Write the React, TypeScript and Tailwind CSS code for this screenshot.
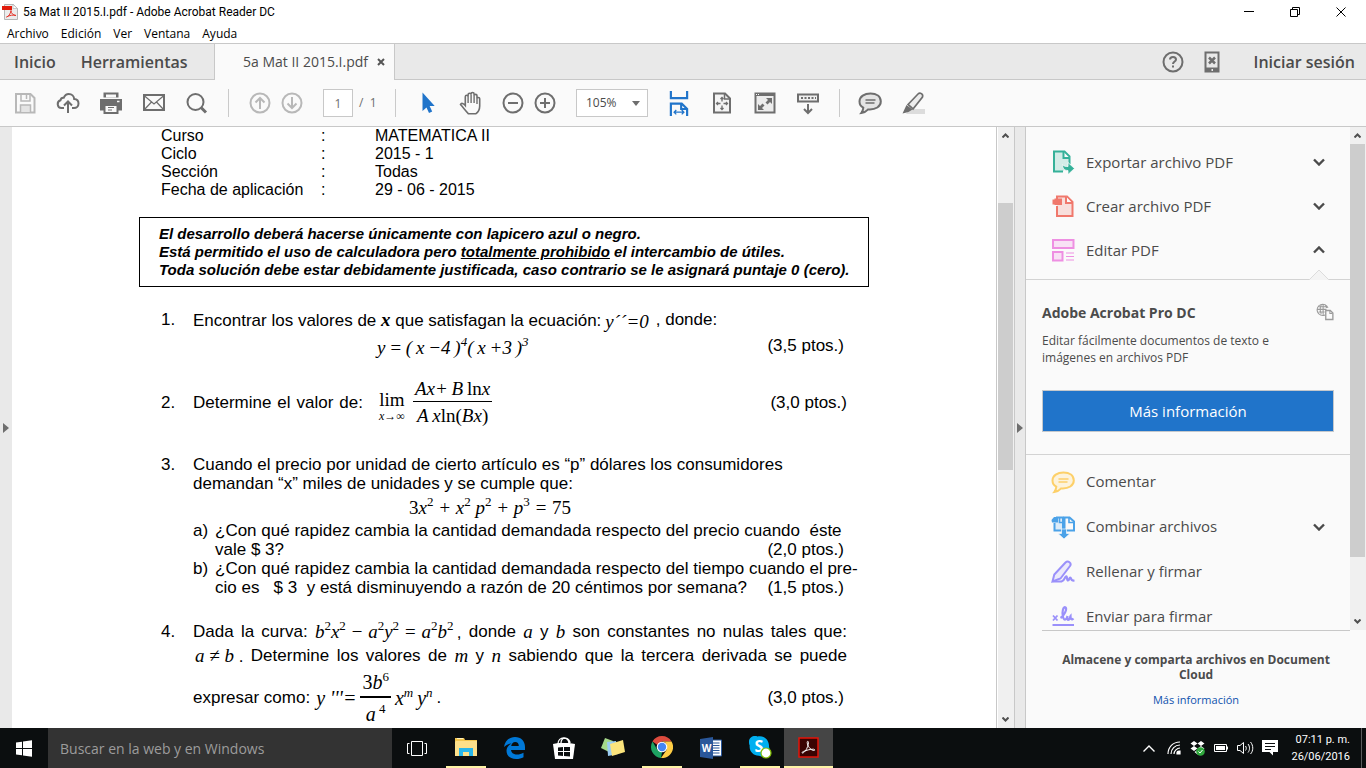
import React from "react";

const UI_FONT = "font-['Open_Sans','Noto_Sans',sans-serif]";
const SYSTEM_FONT = "font-[Roboto,'Open_Sans',sans-serif]";
const DOC_FONT = "font-['Liberation_Sans',Arial,sans-serif]";
const MATH_FONT = "font-['Liberation_Serif','Times_New_Roman',serif]";

interface IconProps {
  children: React.ReactNode;
  size?: number;
}

const Icon: React.FC<IconProps> = ({ children, size = 24 }) => (
  <svg
    width={size}
    height={size}
    viewBox="0 0 24 24"
    fill="none"
    stroke="currentColor"
    strokeWidth="2"
    aria-hidden="true"
    className="shrink-0"
  >
    {children}
  </svg>
);

/* ---------- Toolbar icons ---------- */

const SaveIcon = () => (
  <Icon>
    <path d="M3 3h14.500l4 4v14.500H3z" />
    <path d="M8 3v7h9V3M13.500 4v4" strokeWidth="1.500" />
    <path d="M7.500 21v-7h10v7" fill="#e4e4e4" strokeWidth="1.500" />
  </Icon>
);

const CloudIcon = () => (
  <Icon>
    <path d="M8 17H5.500a4 4 0 0 1-1-7.800c.3-1.700 1.700-2.700 3.300-2.500C8.800 4.300 10.500 3 12.800 3c3 0 5.200 2.200 5.400 5 2.500.1 4.300 2 4.300 4.500S20.600 17 18 17h-2" />
    <path d="M12 22v-11M8 14.500l4-4 4 4" />
  </Icon>
);

const PrintIcon = () => (
  <Icon>
    <path d="M4.500 1.500h15v5h-15z" fill="currentColor" stroke="none" />
    <path d="M7 3.500h10v3H7z" fill="#fafafa" stroke="none" />
    <path d="M1 8h22v11.500H1z" fill="currentColor" stroke="none" />
    <path d="M5.500 14h13v8h-13z" fill="#fafafa" />
    <path d="M9 16.500h6M9 19h4" strokeWidth="1" />
    <path d="M18 10.500h2.500" stroke="#fafafa" strokeWidth="1.500" />
  </Icon>
);

const MailIcon = () => (
  <Icon>
    <path d="M2 4h20v15H2z" />
    <path d="M2 4.500l10 8.500 10-8.500M2 19l7.500-8M22 19l-7.500-8" strokeWidth="1.200" />
  </Icon>
);

const SearchIcon = () => (
  <Icon>
    <circle cx="10.500" cy="11" r="8" />
    <path d="M16 16.500l5 5" strokeWidth="3" />
  </Icon>
);

const ArrowCircleIcon = ({ down = false }: { down?: boolean }) => (
  <Icon>
    <circle cx="12" cy="12" r="9.500" />
    {down ? <path d="M12 6v11M7.500 12.500L12 17l4.500-4.500" /> : <path d="M12 18V7M7.500 11.500L12 7l4.500 4.500" />}
  </Icon>
);

const PointerIcon = () => (
  <Icon>
    <path d="M6.500 1.500v18.500l4-3.500 2.500 5.500 3.200-1.400-2.600-5.600h5.100z" fill="#2074ca" stroke="none" />
  </Icon>
);

const HandIcon = () => (
  <Icon>
    <path
      d="M6.300 14.500V5.800c0-2 2.800-2 2.800 0V3.800c0-2 3-2 3 0V3c0-2 3-2 3 0v1.800c0-1.900 2.900-1.900 2.900 0v3c0-1.800 2.700-1.800 2.700 0V15c0 4-2 6.500-4 7.800H9.500C7 20.500 5 17.500 1.500 13.500c.8-1.900 2.800-1.300 4.800 1z"
      fill="#fafafa"
      strokeWidth="1.600"
    />
    <path d="M9.100 5.500V12M12.100 4v8M15.100 4.500V12M18 7.500V13" strokeWidth="1.400" />
  </Icon>
);

const ZoomIcon = ({ plus = false }: { plus?: boolean }) => (
  <Icon>
    <circle cx="12" cy="12" r="9.500" />
    <path d={plus ? "M7 12h10M12 7v10" : "M7 12h10"} />
  </Icon>
);

const FitWidthIcon = () => (
  <Icon size={26}>
    <g stroke="#2074ca">
      <path d="M4.500 1v6.500h15V1" />
      <path d="M4.500 24V12.500h10l5 5V24M14 12.500V17.500h5" />
      <path d="M7.500 20.500h9M9.500 18.500l-2 2 2 2M14.500 18.500l2 2-2 2" strokeWidth="1.200" />
    </g>
  </Icon>
);

const FitPageIcon = () => (
  <Icon>
    <path d="M4 2.500h11l5 5v14H4z" fill="#f4f4f4" />
    <path d="M14.500 2.500v5.500h5" strokeWidth="1.500" />
    <path d="M12 6.500v4M12 14.500v4M6.500 12.500h4M13.500 12.500h4M10.500 8L12 6.500 13.500 8M10.500 17l1.500 1.500 1.500-1.500M8 11l-1.500 1.500L8 14M16 11l1.500 1.500L16 14" strokeWidth="1.300" />
  </Icon>
);

const FullScreenIcon = () => (
  <Icon>
    <path d="M2.500 2.500h19v19h-19z" fill="#ececec" />
    <path d="M2 3.500h20" strokeWidth="3" />
    <path d="M3 3.500h3" stroke="#fafafa" strokeWidth="1" strokeDasharray="1 1" />
    <path d="M13 7h6v6l-2-2-2.500 2.500-2-2L15 9zM11 19H5v-6l2 2 2.500-2.500 2 2L9 17z" fill="currentColor" stroke="none" />
  </Icon>
);

const ReadModeIcon = () => (
  <Icon>
    <path d="M2 3.500h20v7H2z" fill="#f0f0f0" />
    <path d="M5 7h15" strokeDasharray="2 1.500" />
    <path d="M12 13v9M8 18l4 4 4-4" />
  </Icon>
);

const CommentIcon = ({ fill, color }: { fill: string; color: string }) => (
  <Icon>
    <path
      d="M12.500 2.500C6.500 2.500 1.500 5.500 1.500 10.500c0 2.800 1.500 5 3.800 6.200-.2 2-.7 3.900-1.900 5.300 2.800-.2 5.200-1.900 6.800-3.600 7.500.6 12.600-3 12.600-7.900 0-5-4.300-8-10.300-8z"
      fill={fill}
      stroke={color}
    />
    <path d="M7.500 9h10M7.500 12h9" stroke={color} strokeWidth="1.400" />
  </Icon>
);

const HighlighterIcon = () => (
  <Icon>
    <path d="M8 18h16v5H5z" fill="#dcdcdc" stroke="none" />
    <path d="M7 13.500L17 3c2-2 5.500 0 4.500 3L12 18z" fill="#ececec" strokeWidth="1.700" />
    <path d="M5.500 14l6 4.500-4 2.500-6 1.500z" fill="currentColor" stroke="none" />
  </Icon>
);

/* ---------- Tool panel icons ---------- */

const ExportIcon = () => (
  <Icon>
    <path d="M12 21.500H3v-20h10.500l5 5V14" fill="#d3ece7" stroke="#35b199" />
    <path d="M12.500 2v6H18.500" stroke="#35b199" fill="#fafafa" />
    <path d="M11.500 14.500c1.500 2 3.500 2 5.500 2v-4l6.500 6-6.500 6v-4c-3.500 0-5.500-2-5.500-6z" fill="#35b199" stroke="#fafafa" strokeWidth=".8" />
  </Icon>
);

const CreateIcon = () => (
  <Icon>
    <path d="M6 7V2.500h10l5.500 5.500v14H6V12" fill="#f8dfdc" stroke="#f0786c" />
    <path d="M15 2.500V9h6" fill="#fafafa" stroke="#f0786c" />
    <path d="M2.500 6.500h2V5.500H10V10H4.500V9.500h-2z" fill="#f0786c" stroke="#f0786c" />
  </Icon>
);

const EditIcon = () => (
  <Icon>
    <path d="M2 2h20.500v8H2zM2 14h9.500v8.500H2z" fill="#f8e1f5" stroke="#ee8fe2" />
    <path d="M15 15h8M15 18.500h8M15 22h8" stroke="#ee8fe2" strokeWidth="1.200" />
  </Icon>
);

const CombineIcon = () => (
  <Icon>
    <path d="M3.500 8v7.500H12V2.500H5" fill="#dcecf9" stroke="#4ba2e8" />
    <path d="M13.500 2.500h5l4.500 4v9h-9.500z" fill="#fafafa" stroke="#4ba2e8" />
    <path d="M8.500 3v4.500h3.500M18 3v4.500h4.500" stroke="#4ba2e8" strokeWidth="1.600" />
    <path d="M.5 5l2.500-3h4v5.500H1z" fill="#4ba2e8" stroke="none" />
    <path d="M10.500 14h5v4.500h3.500l-6 5.500-6-5.500h3.500z" fill="#4ba2e8" stroke="#fafafa" strokeWidth=".7" />
  </Icon>
);

const SignIcon = () => (
  <Icon>
    <path d="M1.500 21.500l1.800-7L14.500 2.500c2.500-2.500 6.500.5 4.500 3.500L9.500 18.500z" fill="#ebe9fb" stroke="#9a90fa" />
    <path d="M1.500 21.500h9c3.500-1 3-4.500 4.500-5s.5 4 2 4 1-3 2.300-3-.3 3.500 4.200 3" stroke="#9a90fa" strokeWidth="2.200" />
  </Icon>
);

const SendSignIcon = () => (
  <Icon>
    <path d="M2 10.500l4.500 5M6.500 10.500l-4.500 5" stroke="#9a90fa" strokeWidth="1.800" />
    <path d="M9.500 13c3.500-2 7-9 5-10.500S10.500 7 12 12s4 1.500 4.500-1c-.5 3 0 4.500 1.500 3.500s1-3 1.500-3.500c0 2.500 1 4.500 3 2.500" stroke="#9a90fa" strokeWidth="2.200" />
    <path d="M1.500 20h21.500" stroke="#9a90fa" />
  </Icon>
);

const WebPagesIcon = () => (
  <Icon size={18}>
    <g stroke="#9b9b9b" strokeWidth="1.400">
      <path d="M12 16a7.500 7.500 0 1 1 4-9.500M9.500 1.500v14M2 8.500h12M3.500 5h12M3.500 12h8M7 2.500c-2 4-2 8 0 12M12.500 2.500c1 1.500 1.500 3 1.500 4" />
      <path d="M13 10h6l3.500 3.500V22H13z" fill="#fafafa" strokeWidth="1.800" />
      <path d="M18.500 10v4H22" />
    </g>
  </Icon>
);

const Chevron = ({ up = false }: { up?: boolean }) => (
  <svg width="12" height="8" viewBox="0 0 12 8" fill="none" stroke="#4a4a4a" strokeWidth="2.400" aria-hidden="true">
    <path d={up ? "M1 6.500l5-5 5 5" : "M1 1.500l5 5 5-5"} />
  </svg>
);

/* ---------- Shared pieces ---------- */

interface ScrollbarProps {
  start: number;
  size: number;
}

const Scrollbar: React.FC<ScrollbarProps> = ({ start, size }) => (
  <div className="flex w-4 shrink-0 flex-col bg-[#f0f0f0]">
    <div className="flex h-[17px] w-[15px] items-center justify-center">
      <svg width="7" height="5" viewBox="0 0 7 5" fill="none" stroke="#505050" strokeWidth="2" aria-hidden="true">
        <path d="M.5 4.500l3-3 3 3" />
      </svg>
    </div>
    <div className="flex-1">
      <div style={{ height: `${start}%` }} />
      <div className="w-[15px] bg-[#cdcdcd]" style={{ height: `${size}%` }} />
    </div>
    <div className="flex h-[17px] w-[15px] items-center justify-center">
      <svg width="7" height="5" viewBox="0 0 7 5" fill="none" stroke="#505050" strokeWidth="2" aria-hidden="true">
        <path d="M.5 .5l3 3 3-3" />
      </svg>
    </div>
  </div>
);

interface ToolButtonProps {
  label: string;
  children: React.ReactNode;
  narrow?: boolean;
}

const ToolButton: React.FC<ToolButtonProps> = ({ label, children, narrow }) => (
  <button aria-label={label} className={`flex h-8 shrink-0 items-center justify-center ${narrow ? "w-8" : "w-[43px]"}`}>
    {children}
  </button>
);

const Separator = ({ className = "" }: { className?: string }) => (
  <div className={`h-7 w-px shrink-0 bg-[#cacaca] ${className}`} />
);

/* ---------- Window chrome ---------- */

const MENUS = ["Archivo", "Edición", "Ver", "Ventana", "Ayuda"];

const TitleBar = () => (
  <header>
    <div className="flex h-6 items-center pr-0.5 pl-0.5">
      <svg width="16" height="16" viewBox="0 0 16 16" aria-hidden="true">
        <path d="M2.500.5h9l4 4v11h-13z" fill="#ececec" stroke="#b5b5b5" />
        <path d="M11 .5v4h4.500z" fill="#fff" stroke="#b5b5b5" strokeWidth=".7" />
        <path d="M0 2h10v4H0z" fill="#e01b0c" />
        <path d="M4.500 13c2-.5 4-3 4.500-6.500 0 3 2 4.500 5 5-3-.7-6-.5-9.500 1.500z" fill="none" stroke="#e5352a" />
      </svg>
      <h1 className={`ml-[5px] flex-1 text-[12px] ${SYSTEM_FONT}`}>5a Mat II 2015.I.pdf - Adobe Acrobat Reader DC</h1>
      <button aria-label="Minimizar" className="flex h-5 w-[46px] items-center justify-center">
        <svg width="10" height="10" stroke="#000"><path d="M0 4.500h10" /></svg>
      </button>
      <button aria-label="Restaurar" className="flex h-5 w-[46px] items-center justify-center">
        <svg width="11" height="11" fill="none" stroke="#000"><path d="M.5 2.500h7v7h-7zM2.500 2V.5h7v7H8" /></svg>
      </button>
      <button aria-label="Cerrar" className="flex h-5 w-[46px] items-center justify-center">
        <svg width="11" height="11" stroke="#000"><path d="M.5.5l9 9M9.500.5l-9 9" /></svg>
      </button>
    </div>
    <nav className="flex h-[19px] items-center gap-3 pl-[7px] text-[12px]">
      {MENUS.map((menu) => (
        <button key={menu}>{menu}</button>
      ))}
    </nav>
  </header>
);

const TabBar = () => (
  <div className="flex h-[37px] shrink-0 border-t border-[#c8c8c8] bg-[#e9e9e9] text-[#4b4b4b]">
    <div className="flex w-[214px] items-center gap-[25px] border-b border-[#c8c8c8] pl-[14px] text-[16px] font-semibold">
      <button>Inicio</button>
      <button>Herramientas</button>
    </div>
    <div className="flex w-[181px] items-center gap-[9px] border-x border-[#c8c8c8] bg-[#fafafa] pb-px pl-7 text-[14px]">
      <span>5a Mat II 2015.I.pdf</span>
      <button aria-label="Cerrar pestaña">
        <svg width="8" height="8" stroke="#555" strokeWidth="2"><path d="M1 1l6 6M7 1L1 7" /></svg>
      </button>
    </div>
    <div className="flex flex-1 items-center justify-end border-b border-[#c8c8c8] pr-[11px] text-[#6e6e6e]">
      <button aria-label="Ayuda" className="mr-[15px]">
        <Icon>
          <circle cx="12" cy="12" r="9.500" />
          <path d="M9 9.500c0-3.500 6-3.500 6 0 0 2-3 2-3 4.500M12 15.500v2" />
        </Icon>
      </button>
      <button aria-label="Dispositivo móvil" className="mr-[30px]">
        <Icon>
          <path d="M5.500 2.500h13v19h-13z" />
          <path d="M5 19.500h14" strokeWidth="4" />
          <path d="M9 7.500l6 6M15 7.500l-6 6" strokeWidth="2.500" />
          <path d="M11.500 20h1.500" stroke="#e9e9e9" />
        </Icon>
      </button>
      <button className="text-[16px] font-semibold text-[#4b4b4b]">Iniciar sesión</button>
    </div>
  </div>
);

const Toolbar = () => (
  <div className="flex h-[47px] shrink-0 items-center border-b border-[#c8c8c8] bg-[#fafafa] pl-[3px] text-[#6e6e6e]">
    <span className="flex text-[#b8b8b8]">
      <ToolButton label="Guardar"><SaveIcon /></ToolButton>
    </span>
    <ToolButton label="Publicar en la nube"><CloudIcon /></ToolButton>
    <ToolButton label="Imprimir"><PrintIcon /></ToolButton>
    <ToolButton label="Correo"><MailIcon /></ToolButton>
    <ToolButton label="Buscar"><SearchIcon /></ToolButton>
    <Separator className="ml-[10px]" />
    <span className="ml-[15px] flex text-[#b8b8b8]">
      <ToolButton narrow label="Página anterior"><ArrowCircleIcon /></ToolButton>
      <ToolButton narrow label="Página siguiente"><ArrowCircleIcon down /></ToolButton>
    </span>
    <input
      aria-label="Página"
      defaultValue="1"
      className="ml-[15px] h-7 w-[30px] border border-[#c8c8c8] bg-white text-center text-[12px]"
    />
    <span className="w-[42px] pl-1.5 text-[12px] whitespace-pre">/  1</span>
    <Separator />
    <span className="ml-[10px] flex">
      <ToolButton label="Seleccionar"><PointerIcon /></ToolButton>
      <ToolButton label="Mano"><HandIcon /></ToolButton>
    </span>
    <span className="ml-[5px] flex">
      <ToolButton narrow label="Alejar"><ZoomIcon /></ToolButton>
      <ToolButton narrow label="Acercar"><ZoomIcon plus /></ToolButton>
    </span>
    <div className="relative ml-[15px]">
      <select
        aria-label="Zoom"
        className="block h-7 w-[72px] appearance-none border border-[#c8c8c8] bg-white pl-[9px] text-[12px] text-[#4b4b4b]"
      >
        <option>105%</option>
      </select>
      <svg width="8" height="5" className="pointer-events-none absolute top-3 right-2" fill="#6e6e6e">
        <path d="M0 0h8L4 5z" />
      </svg>
    </div>
    <span className="ml-[9px] flex">
      <ToolButton label="Ajustar al ancho"><FitWidthIcon /></ToolButton>
      <ToolButton label="Ajustar a la página"><FitPageIcon /></ToolButton>
      <ToolButton label="Pantalla completa"><FullScreenIcon /></ToolButton>
      <ToolButton label="Modo lectura"><ReadModeIcon /></ToolButton>
    </span>
    <Separator className="ml-[10px]" />
    <span className="ml-2 flex">
      <ToolButton label="Agregar nota"><CommentIcon fill="#e4e4e4" color="#6e6e6e" /></ToolButton>
      <ToolButton label="Resaltar"><HighlighterIcon /></ToolButton>
    </span>
  </div>
);

/* ---------- Document ---------- */

const COURSE_INFO = [
  ["Curso", "MATEMATICA II"],
  ["Ciclo", "2015 - 1"],
  ["Sección", "Todas"],
  ["Fecha de aplicación", "29 - 06 - 2015"],
];

const MathText = ({ children, className = "text-[19px]" }: { children: React.ReactNode; className?: string }) => (
  <span className={`${MATH_FONT} whitespace-pre italic ${className}`}>{children}</span>
);

const Rm = ({ children }: { children: React.ReactNode }) => <span className="not-italic">{children}</span>;

const Sup = ({ children, upright }: { children: React.ReactNode; upright?: boolean }) => (
  <sup className={`-top-2 text-[13px] ${upright ? "not-italic" : ""}`}>{children}</sup>
);

interface FractionProps {
  top: React.ReactNode;
  bottom: React.ReactNode;
  thick?: boolean;
}

const Fraction: React.FC<FractionProps> = ({ top, bottom, thick }) => (
  <span className="inline-flex flex-col text-center">
    <span className={`border-black px-0.5 ${thick ? "border-b-2" : "border-b"}`}>{top}</span>
    <span className="px-0.5 pt-0.5">{bottom}</span>
  </span>
);

const Question = ({ n, className, children }: { n: number; className: string; children: React.ReactNode }) => (
  <li className={`grid grid-cols-[32px_minmax(0,1fr)] ${className}`}>
    <span>{n}.</span>
    <div>{children}</div>
  </li>
);

const DocumentPage = () => (
  <article className={`mx-auto w-[730px] text-[16px] text-black ${DOC_FONT}`}>
    <table className="ml-[22px] leading-[18px]">
      <tbody>
        {COURSE_INFO.map(([name, value]) => (
          <tr key={name}>
            <th scope="row" className="w-[160px] p-0 text-left font-normal">{name}</th>
            <td className="w-[54px] p-0">:</td>
            <td className="p-0">{value}</td>
          </tr>
        ))}
      </tbody>
    </table>

    <div className="mt-[18px] h-[70px] border border-black pt-[7px] pl-[19px] text-[15px] leading-[18px] font-bold whitespace-nowrap italic">
      <p>El desarrollo deberá hacerse únicamente con lapicero azul o negro.</p>
      <p>Está permitido el uso de calculadora pero <u>totalmente prohibido</u> el intercambio de útiles.</p>
      <p>Toda solución debe estar debidamente justificada, caso contrario se le asignará puntaje 0 (cero).</p>
    </div>

    <ol className="px-[22px] text-[17px] leading-[19px] whitespace-nowrap">
      <Question n={1} className="mt-[23px]">
        <div className="flex h-5">
          <span>Encontrar los valores de <b className={`${MATH_FONT} text-[19px] leading-none italic`}>x</b> que satisfagan la ecuación:</span>
          <span className="ml-1 pt-0.5"><MathText>y´´=0</MathText></span>
          <span className="ml-[7px]">, donde:</span>
        </div>
        <div className="flex h-[30px] items-center justify-between pr-[3px]">
          <span className="ml-[184px] pt-1.5">
            <MathText>y&#8201;=&#8201;(&#8201;x&#8201;−4&#8201;)<Sup>4</Sup>(&#8201;x&#8201;+3&#8201;)<Sup>3</Sup></MathText>
          </span>
          <span>(3,5 ptos.)</span>
        </div>
      </Question>

      <li className="mt-[17px] grid grid-cols-[32px_minmax(0,1fr)] items-center">
        <span>2.</span>
        <div className="flex h-[50px] items-center">
          <span className="w-[170px] [text-align-last:justify]">Determine el valor de:</span>
          <span className={`ml-4 flex flex-col items-center pt-3 leading-[16px] ${MATH_FONT}`}>
            <span className="text-[19px]">lim</span>
            <span className="text-[12px]"><i>x</i>→∞</span>
          </span>
          <span className="ml-2 leading-6">
            <MathText>
              <Fraction
                top={<>Ax+&#8201;B&#8201;<Rm>ln</Rm>x</>}
                bottom={<>A&#8201;x<Rm>ln(</Rm>Bx<Rm>)</Rm></>}
              />
            </MathText>
          </span>
          <span className="ml-auto">(3,0 ptos.)</span>
        </div>
      </li>

      <Question n={3} className="mt-7">
        <p>Cuando el precio por unidad de cierto artículo es “p” dólares los consumidores</p>
        <p>demandan “x” miles de unidades y se cumple que:</p>
        <div className="flex h-7 items-center pl-[216px]">
          <MathText>
            <Rm>3</Rm>x<Sup upright>2</Sup> + x<Sup upright>2</Sup> p<Sup upright>2</Sup> + p<Sup upright>3</Sup> = <Rm>75</Rm>
          </MathText>
        </div>
        <div className="grid grid-cols-[22px_minmax(0,1fr)]">
          <span>a)</span>
          <div>
            <p className="whitespace-pre">¿Con qué rapidez cambia la cantidad demandada respecto del precio cuando  éste</p>
            <p className="flex justify-between pr-[3px]"><span>vale $ 3?</span><span>(2,0 ptos.)</span></p>
          </div>
          <span>b)</span>
          <div>
            <p>¿Con qué rapidez cambia la cantidad demandada respecto del tiempo cuando el pre-</p>
            <p className="flex justify-between pr-[3px]">
              <span className="whitespace-pre">cio es   $ 3  y está disminuyendo a razón de 20 céntimos por semana?</span>
              <span>(1,5 ptos.)</span>
            </p>
          </div>
        </div>
      </Question>

      <Question n={4} className="mt-[23px] leading-6">
        <div className="flex h-6 justify-between">
          <span>Dada</span>
          <span>la</span>
          <span>curva:</span>
          <span>
            <MathText>
              b<Sup upright>2</Sup>x<Sup upright>2</Sup> − a<Sup upright>2</Sup>y<Sup upright>2</Sup> = a<Sup upright>2</Sup>b<Sup upright>2</Sup>
            </MathText>
            &#8201;,
          </span>
          <span>donde</span>
          <MathText>a</MathText>
          <span>y</span>
          <MathText>b</MathText>
          <span>son</span>
          <span>constantes</span>
          <span>no</span>
          <span>nulas</span>
          <span>tales</span>
          <span>que:</span>
        </div>
        <div className="flex h-6 justify-between pl-0.5">
          <span><MathText>a ≠ b</MathText> .</span>
          <span>Determine</span>
          <span>los</span>
          <span>valores</span>
          <span>de</span>
          <MathText>m</MathText>
          <span>y</span>
          <MathText>n</MathText>
          <span>sabiendo</span>
          <span>que</span>
          <span>la</span>
          <span>tercera</span>
          <span>derivada</span>
          <span>se</span>
          <span>puede</span>
        </div>
        <div className="flex h-[60px] items-center pr-[3px]">
          <span>expresar como:</span>
          <MathText className="ml-1.5 flex items-center text-[20px] leading-7">
            <span className="mr-1">y '''=</span>
            <Fraction
              thick
              top={<><Rm>3</Rm>b<Sup upright>6</Sup></>}
              bottom={<>a<Sup upright> 4</Sup></>}
            />
            <span className="ml-1">x<Sup>m</Sup>&#8201;y<Sup>n</Sup></span>
          </MathText>
          <span className="ml-1">.</span>
          <span className="ml-auto">(3,0 ptos.)</span>
        </div>
      </Question>
    </ol>
  </article>
);

/* ---------- Tool panel ---------- */

interface ToolRowProps {
  icon: React.ReactNode;
  label: string;
  state?: "open" | "closed";
  className: string;
}

const ToolRow: React.FC<ToolRowProps> = ({ icon, label, state, className }) => (
  <button className={`flex w-full items-center pr-[25px] pl-[25px] text-[15px] ${className}`}>
    {icon}
    <span className="ml-[11px] flex-1 text-left">{label}</span>
    {state && <Chevron up={state === "open"} />}
  </button>
);

const ToolPanel = () => (
  <aside className="flex w-[340px] shrink-0 flex-col bg-[#fafafa] text-[#4b4b4b]">
    <div className="flex min-h-0 flex-1">
      <div className="min-w-0 flex-1 overflow-hidden">
        <div className="relative border-b border-[#d3d3d3] pt-[13px] pb-[7px]">
          <ToolRow className="h-11" icon={<ExportIcon />} label="Exportar archivo PDF" state="closed" />
          <ToolRow className="h-11" icon={<CreateIcon />} label="Crear archivo PDF" state="closed" />
          <ToolRow className="h-11" icon={<EditIcon />} label="Editar PDF" state="open" />
          <svg width="20" height="11" className="absolute right-[21px] -bottom-px" fill="#f4f4f4" stroke="#dcdcdc">
            <path d="M0 11L10 1l10 10" />
          </svg>
        </div>
        <section className="border-b border-[#d3d3d3] px-4 pt-[22px] pb-[22px]">
          <div className="flex h-5 items-center justify-between">
            <h2 className="text-[14px] font-bold">Adobe Acrobat Pro DC</h2>
            <WebPagesIcon />
          </div>
          <p className="mt-[10px] text-[12px] leading-[17px]">
            Editar fácilmente documentos de texto e<br />imágenes en archivos PDF
          </p>
          <button className="mt-6 h-[42px] w-full border border-[#c4c8cc] bg-[#2074ca] text-[15px] text-white">
            Más información
          </button>
        </section>
        <div className="pt-1">
          <ToolRow className="h-[45px]" icon={<CommentIcon fill="#fdf3dc" color="#fdd069" />} label="Comentar" />
          <ToolRow className="h-[45px]" icon={<CombineIcon />} label="Combinar archivos" state="closed" />
          <ToolRow className="h-[45px]" icon={<SignIcon />} label="Rellenar y firmar" />
          <ToolRow className="h-[45px]" icon={<SendSignIcon />} label="Enviar para firmar" />
        </div>
      </div>
      <Scrollbar start={0} size={88} />
    </div>
    <div className="mx-4 border-t border-[#c8c8c8]" />
    <footer className="h-[97px] px-6 pt-[21px] text-center">
      <p className="text-[12px] leading-[15px] font-bold">Almacene y comparta archivos en Document Cloud</p>
      <a href="#cloud" className="mt-[10px] block text-[11px] leading-4 text-[#0e52ae]">Más información</a>
    </footer>
  </aside>
);

/* ---------- Taskbar ---------- */

const TASKS = [
  {
    name: "Explorador de archivos",
    running: true,
    icon: (
      <svg width="22" height="20" viewBox="0 0 22 20">
        <path d="M0 1h9l1 2h12v16H0z" fill="#f3c64f" />
        <path d="M1 4h21v15H0V5z" fill="#fde08a" />
        <path d="M4 11h14v8h-4v-4H8v4H4z" fill="#28b6ea" />
        <path d="M2 1.500h6" stroke="#fff3c4" />
      </svg>
    ),
  },
  {
    name: "Edge",
    icon: (
      <svg width="21" height="22" viewBox="0 0 21 22">
        <path
          d="M0 10C1 4 5 0 11 0c6 0 10 4 10 10v3H7c.3 3 3 4.500 6 4.500 2.500 0 4.500-.7 6.500-1.800v4.500C17.500 21.400 15 22 12 22c-5.500 0-9.500-3-9.500-8.200C2.500 10.500 4.500 8 7.500 6.500 4.500 6.800 2 8 0 10zm7.200-1h7.600c0-2.500-1.300-4-3.600-4-2.200 0-3.700 1.700-4 4z"
          fill="#0078d7"
        />
      </svg>
    ),
  },
  {
    name: "Tienda",
    icon: (
      <svg width="22" height="24" viewBox="0 0 22 24">
        <path d="M0 8l5-1h11l6 1-2 15H2z" fill="#fff" />
        <path d="M5 8c0-8 11-8 11 0M8 7c0-8 9-5 9 0" fill="none" stroke="#fff" strokeWidth="1.300" />
        <path d="M5 11.500l5-.5v4H5zM11 11h6v4h-6zM5 16h5v4l-5-.5zM11 16h6v4.500l-6-.5z" fill="#0b0e0f" />
      </svg>
    ),
  },
  {
    name: "Notas",
    icon: (
      <svg width="24" height="20" viewBox="0 0 24 20">
        <path d="M4 0l8 3-4 11-8-4z" fill="#a5d98a" />
        <path d="M6 4l9-1 2 13-10 2z" fill="#9bcdf3" />
        <path d="M9 6l13-4 2 12-13 4z" fill="#fbe47c" />
      </svg>
    ),
  },
  {
    name: "Chrome",
    running: true,
    icon: (
      <svg width="22" height="22" viewBox="0 0 22 22">
        <path d="M11 0a11 11 0 0 1 9.500 5.500H11L6.500 9 1.500 5.500A11 11 0 0 1 11 0z" fill="#dd4b3e" />
        <path d="M1.500 5.500L6.300 13.700 11 16l-1 6A11 11 0 0 1 1.500 5.500z" fill="#1da362" />
        <path d="M20.500 5.500A11 11 0 0 1 10 22l5.700-8.300L15 7l-4-1.500z" fill="#ffcd45" />
        <circle cx="11" cy="11" r="5.300" fill="#fff" />
        <circle cx="11" cy="11" r="4.200" fill="#4586f3" />
      </svg>
    ),
  },
  {
    name: "Word",
    icon: (
      <svg width="22" height="22" viewBox="0 0 22 22">
        <path d="M11 3h10.500v16H11z" fill="#fff" stroke="#2a579a" />
        <path d="M13 6h6.500M13 8.500h6.500M13 11h6.500M13 13.500h6.500M13 16h6.500" stroke="#2a579a" />
        <path d="M0 2l13-2v22L0 20z" fill="#2a579a" />
        <text x="6.500" y="15" fontSize="10" fontWeight="bold" textAnchor="middle" fill="#fff">W</text>
      </svg>
    ),
  },
  {
    name: "Skype",
    running: true,
    icon: (
      <svg width="24" height="24" viewBox="0 0 24 24">
        <path d="M1 6.500C1 2 6 0 9.500 1.500 16 0 21.500 5 21 12c2 4-1 9-5.500 9.500-2.500.3-3-.8-4.500-.8C5 20.700 1 16 1.700 10.500 1 9 1 8 1 6.500z" fill="#00aff0" />
        <text x="11" y="17" fontSize="16" fontWeight="bold" textAnchor="middle" fill="#fff">S</text>
        <circle cx="18" cy="18" r="5" fill="#fff" stroke="#7fba00" strokeWidth="1.200" />
      </svg>
    ),
  },
  {
    name: "Acrobat Reader",
    running: true,
    active: true,
    icon: (
      <svg width="21" height="21" viewBox="0 0 21 21">
        <path d="M1 1h19v19H1z" fill="#390403" stroke="#e41309" strokeWidth="1.500" />
        <path
          d="M4.500 16c2 0 5.500-5 6-10.500 0-1.500-1.500-1.500-1.300 0C9.500 9 12.500 13 15.500 13.500c1.800.3 1.500-1.300 0-1.300-3.500 0-7 1-10.200 2.300-1.300.6-1.800 1.500-.8 1.500z"
          fill="none"
          stroke="#fff"
        />
      </svg>
    ),
  },
];

const Taskbar = () => (
  <footer className="flex h-10 shrink-0 items-center bg-[#0b0e0f] text-white">
    <button aria-label="Inicio" className="flex h-10 w-12 items-center justify-center">
      <svg width="16" height="17" fill="#fff">
        <path d="M0 2.500l6-.8V8H0zM7 1.500L16 .3V8H7zM0 9h6v6.300l-6-.8zM7 9h9v7.700l-9-1.200z" />
      </svg>
    </button>
    <input
      aria-label="Buscar"
      placeholder="Buscar en la web y en Windows"
      className="h-10 w-[344px] bg-[#333333] pl-3 text-[14px] placeholder:text-[#9c9c9c]"
    />
    <button aria-label="Vista de tareas" className="flex h-10 w-[49px] items-center justify-center">
      <svg width="20" height="15" fill="none" stroke="#fff">
        <path d="M4.500.5h11v14h-11zM2.500 2.500h-2v10h2M17.500 2.500h2v10h-2" />
      </svg>
    </button>
    {TASKS.map((task) => (
      <button
        key={task.name}
        aria-label={task.name}
        className={`flex h-10 w-[49px] flex-col items-center ${task.active ? "bg-[#454545]" : ""}`}
      >
        <span className="flex flex-1 items-center">{task.icon}</span>
        {task.running && <span className={`h-0.5 bg-[#fdf3a5] ${task.active ? "w-full" : "w-10"}`} />}
      </button>
    ))}
    <div className="ml-auto flex items-center">
      <svg width="12" height="7" fill="none" stroke="#fff" strokeWidth="1.400"><path d="M.5 6.500L6 1l5.500 5.500" /></svg>
      <svg width="14" height="14" className="ml-3" fill="none" stroke="#fff" strokeWidth="1.200">
        <path d="M1 13C1 6 6 1 13 1M4 13c0-5 4-9 9-9M7 13c0-3 3-6 6-6" />
        <path d="M10 13v-1.500c0-1 1-1.500 2-1.500h1v3z" fill="#fff" />
      </svg>
      <svg width="15" height="15" className="ml-[9px]" fill="#fff">
        <path d="M4 0l3.500 2.500L4 5 .5 2.500zM11 0l3.500 2.500L11 5 7.500 2.500zM4 5l3.500 2.500L4 10 .5 7.500zM11 5l3.500 2.500L11 10 7.500 7.500zM7.500 9l3 2-3 2.500-3-2.500z" />
        <circle cx="10.500" cy="10.500" r="4.300" fill="#2fa83c" />
        <path d="M8.500 10.500l1.500 1.500 2.500-3" fill="none" stroke="#fff" />
      </svg>
      <svg width="15" height="10" className="ml-[9px]" fill="none" stroke="#fff">
        <path d="M.5 1.500h12v7H.5z" /><path d="M2 3h9v4H2z" fill="#fff" stroke="none" /><path d="M13.500 3.500v3" />
      </svg>
      <svg width="17" height="14" className="ml-2" fill="none" stroke="#fff">
        <path d="M.5 4.500h2.500l3.500-3v11L3 9.500H.5zM8.500 5c1 1.500 1 3 0 4.500M11 3c2 2.500 2 6 0 8.500M13.500 1c3 3.500 3 9 0 12" />
      </svg>
      <svg width="16" height="16" className="ml-2" fill="#fff">
        <path d="M0 0h16v12h-5v3.500L7.500 12H0z" />
        <path d="M3 3.500h10M3 6.500h10M3 9.500h6" stroke="#0b0e0f" />
      </svg>
      <time className={`ml-[13px] w-[59px] text-right text-[11px] leading-[17px] whitespace-nowrap ${SYSTEM_FONT}`}>
        07:11 p. m.<br />26/06/2016
      </time>
      <div className="ml-[11px] h-10 w-[5px] border-l border-[#5a5c5d]" />
    </div>
  </footer>
);

export default function App() {
  return (
    <div className={`flex h-screen flex-col overflow-hidden bg-white text-black ${UI_FONT}`}>
      <TitleBar />
      <TabBar />
      <Toolbar />
      <div className="flex min-h-0 flex-1">
        <button aria-label="Mostrar panel de navegación" className="flex w-3 shrink-0 items-center justify-center bg-[#e9e9e9]">
          <svg width="6" height="10" fill="#6e6e6e"><path d="M0 0l6 5-6 5z" /></svg>
        </button>
        <main className="min-w-0 flex-1 overflow-hidden">
          <DocumentPage />
        </main>
        <div className="flex border-x border-[#c8c8c8] pl-px">
          <Scrollbar start={10.4} size={47.1} />
        </div>
        <button aria-label="Ocultar panel de herramientas" className="flex w-[11px] shrink-0 items-center justify-center border-r border-[#c8c8c8] bg-[#e9e9e9]">
          <svg width="6" height="10" fill="#6e6e6e"><path d="M0 0l6 5-6 5z" /></svg>
        </button>
        <ToolPanel />
      </div>
      <Taskbar />
    </div>
  );
}
